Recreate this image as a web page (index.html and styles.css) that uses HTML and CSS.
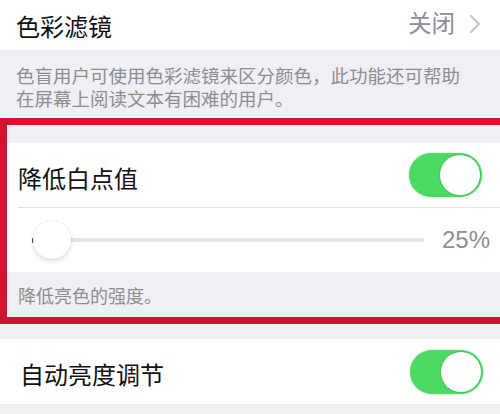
FILE: index.html
```html
<!DOCTYPE html>
<html lang="zh">
<head>
<meta charset="utf-8">
<link rel="stylesheet" href="styles.css">
</head>
<body>
<div class="page">
  <div class="row row-top">
    <span class="title">色彩滤镜</span>
    <span class="value">关闭
      <svg class="chev" width="14" height="20" viewBox="0 0 14 20"><polyline points="3,2 11,10 3,18" fill="none" stroke="#c4c4c8" stroke-width="2.2" stroke-linecap="round" stroke-linejoin="round"/></svg>
    </span>
  </div>
  <div class="note note-first">色盲用户可使用色彩滤镜来区分颜色，此功能还可帮助在屏幕上阅读文本有困难的用户。</div>

  <div class="highlight">
    <div class="gap-strip"></div>
    <div class="group">
      <div class="row row-toggle">
        <span class="title">降低白点值</span>
        <span class="switch"><span class="knob"></span></span>
      </div>
      <div class="sep"></div>
      <div class="row row-slider">
        <div class="slider">
          <span class="track"></span>
          <span class="mintick"></span>
          <span class="thumb"></span>
        </div>
        <span class="pct">25%</span>
      </div>
    </div>
    <div class="note note-inner">降低亮色的强度。</div>
  </div>

  <div class="gap-strip2"></div>
  <div class="row row-auto">
    <span class="title">自动亮度调节</span>
    <span class="switch"><span class="knob"></span></span>
  </div>
</div>
</body>
</html>
```

FILE: styles.css
```css
html, body {
  margin: 0;
  padding: 0;
  background: #efeff4;
  overflow: hidden;
}
body {
  width: 500px;
  height: 414px;
  font-family: "Noto Sans CJK SC", "Noto Sans", sans-serif;
}
.page {
  display: flex;
  flex-direction: column;
}
.row {
  display: flex;
  align-items: center;
  justify-content: space-between;
  background: #fff;
}
.title {
  font-size: 24px;
  color: #111;
  line-height: 1;
}
.row-top {
  height: 50px;
  padding: 0 18px 0 16px;
}
.row-top .title {
  padding-top: 2px;
}
.value {
  display: flex;
  align-items: center;
  gap: 13px;
  font-size: 23.5px;
  color: #8e8e93;
  line-height: 1;
  margin-bottom: 5px;
}
.chev {
  display: block;
  margin-top: 2px;
}
.note {
  font-size: 18.5px;
  line-height: 23px;
  color: #8d8d92;
}
.note-first {
  padding: 14px 36px 0 16px;
  height: 54px;
}
.highlight {
  border: 7px solid #d3142e;
  border-right: none;
  display: flex;
  flex-direction: column;
}
.gap-strip {
  height: 18px;
}
.group {
  background: #fff;
}
.row-toggle {
  height: 64px;
  padding: 0 18px 0 11px;
}
.row-toggle .title,
.row-auto .title {
  padding-top: 5px;
}
.sep {
  height: 1px;
  background: #e3e3e6;
  margin-left: 11px;
}
.row-slider {
  height: 64px;
  padding: 0 10px 0 26px;
  gap: 18px;
}
.slider {
  position: relative;
  flex: 1;
  height: 40px;
  display: flex;
  align-items: center;
}
.track {
  display: block;
  width: 100%;
  height: 4px;
  border-radius: 2px;
  background: #e4e4e6;
}
.mintick {
  position: absolute;
  left: -1px;
  top: 18px;
  width: 3px;
  height: 5px;
  border-radius: 1px;
  background: #3a4a5a;
}
.thumb {
  position: absolute;
  left: 0;
  top: 1px;
  width: 38px;
  height: 38px;
  border-radius: 50%;
  background: #fff;
  box-shadow: 0 2px 5px rgba(0,0,0,0.14), 0 0 1px rgba(0,0,0,0.12);
}
.pct {
  font-family: "Liberation Sans", "Noto Sans", sans-serif;
  font-size: 24px;
  color: #8e8e93;
  line-height: 1;
}
.note-inner {
  height: 45px;
  padding: 2px 0 0 11px;
  box-sizing: border-box;
  display: flex;
  align-items: center;
  font-size: 18px;
}
.switch {
  position: relative;
  display: block;
  width: 73px;
  height: 44px;
  border-radius: 22px;
  background: #4cd964;
  box-shadow: 0 0 2px rgba(76,217,100,0.6);
}
.knob {
  position: absolute;
  right: 2px;
  top: 2px;
  width: 40px;
  height: 40px;
  border-radius: 50%;
  background: #fff;
  box-shadow: 0 0 0 1px rgba(60,160,80,0.35);
}
.gap-strip2 {
  height: 15px;
}
.row-auto {
  height: 65px;
  padding: 0 17px 0 20px;
}
```
